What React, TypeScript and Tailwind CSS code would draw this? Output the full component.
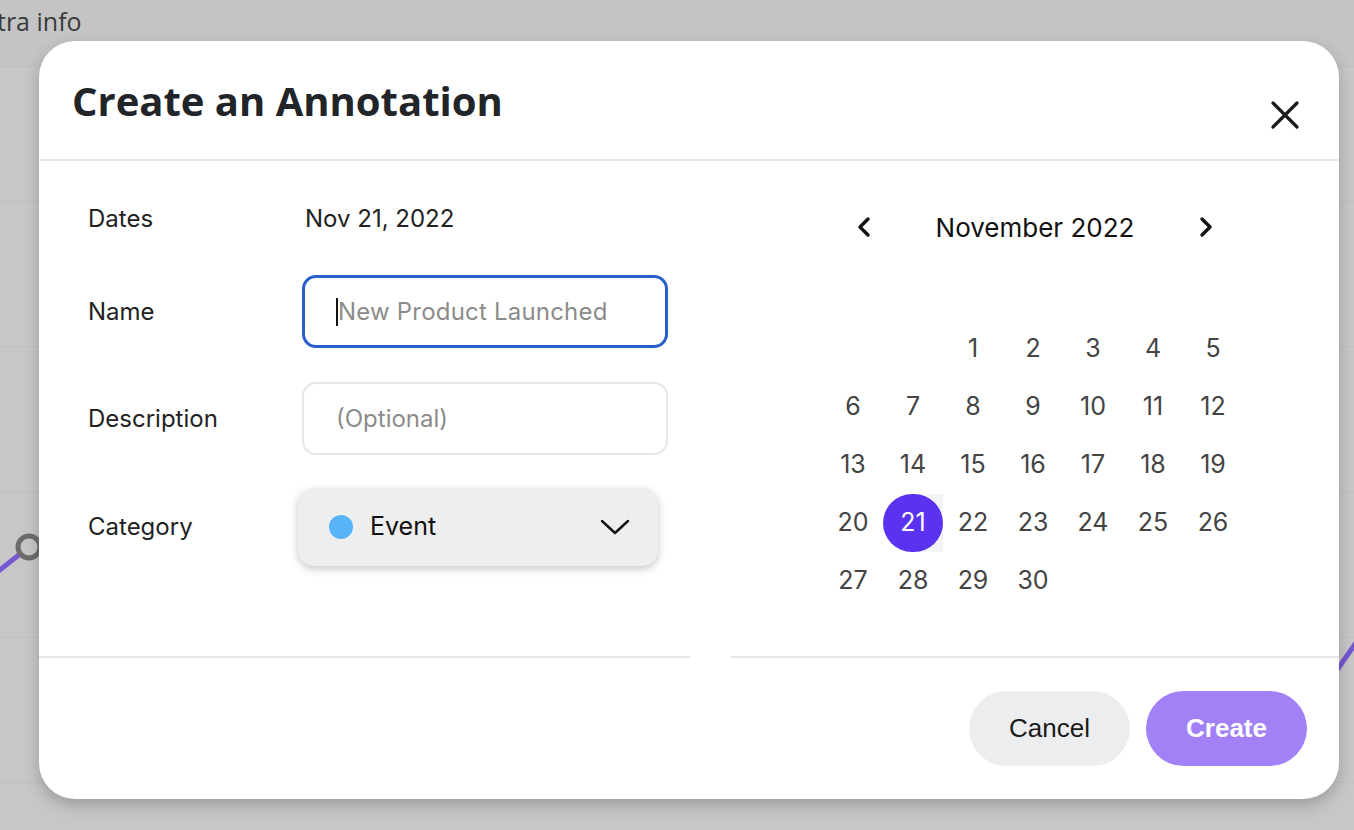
import React from "react";

const days: (number | null)[] = [
  null, null, 1, 2, 3, 4, 5,
  6, 7, 8, 9, 10, 11, 12,
  13, 14, 15, 16, 17, 18, 19,
  20, 21, 22, 23, 24, 25, 26,
  27, 28, 29, 30, null, null, null,
];

function Chevron({ dir }: { dir: "left" | "right" }) {
  return (
    <svg width="16" height="22" viewBox="0 0 16 22" fill="none">
      <polyline
        points={dir === "left" ? "12,3 4,11 12,19" : "4,3 12,11 4,19"}
        stroke="#111"
        strokeWidth="3.4"
        strokeLinecap="round"
        strokeLinejoin="round"
      />
    </svg>
  );
}

export default function App() {
  return (
    <div className="relative w-[1354px] h-[830px] overflow-hidden bg-[#c7c7c7] font-['Inter',sans-serif]">
      {/* page behind the overlay */}
      <div className="h-[67px] bg-[#c4c4c4] border-b border-[#bfbfbf]">
        <div className="ml-[-30px] pt-[3px] font-['Open_Sans',sans-serif] text-[25px] text-[#3b3b3b]">
          Extra info
        </div>
      </div>
      <div className="flex flex-col">
        <div className="h-[135px] border-b border-[#bfbfbf]" />
        <div className="h-[145px] border-b border-[#bfbfbf]" />
        <div className="h-[146px] border-b border-[#bfbfbf]" />
        <div className="h-[145px] border-b border-[#bfbfbf]" />
        <div className="h-[145px] border-b border-[#bfbfbf]" />
      </div>
      <svg className="absolute inset-0" width="1354" height="830">
        <line x1="-4" y1="573" x2="20" y2="554" stroke="#7558d2" strokeWidth="5" />
        <circle cx="29" cy="547" r="11" fill="#c7c7c7" stroke="#6c6c6c" strokeWidth="5" />
        <line x1="1330" y1="680" x2="1358" y2="640" stroke="#7558d2" strokeWidth="5" />
      </svg>

      {/* modal */}
      <div className="absolute left-[39px] top-[41px] w-[1300px] h-[758px] bg-white rounded-[36px] shadow-[0_6px_16px_rgba(0,0,0,0.22)] flex flex-col">
        <div className="h-[120px] flex items-start justify-between pl-[33px] pr-[40px] border-b-2 border-[#e6e6e6]">
          <h1 className="mt-[36px] font-['Open_Sans',sans-serif] font-bold text-[40px] leading-[48px] text-[#212428]">
            Create an Annotation
          </h1>
          <button className="mt-[60px]">
            <svg width="28" height="28" viewBox="0 0 28 28" fill="none">
              <path d="M2 2 L26 26 M26 2 L2 26" stroke="#1a1a1a" strokeWidth="3.2" strokeLinecap="round" />
            </svg>
          </button>
        </div>

        <div className="flex gap-[41px]">
          {/* form */}
          <div className="w-[651px] h-[497px] border-b-2 border-[#e6e6e6] pl-[49px] pt-[40px] text-[24px] text-[#222]">
            <div className="flex items-center h-[36px]">
              <div className="w-[217px]">Dates</div>
              <div>Nov 21, 2022</div>
            </div>
            <div className="flex items-center mt-[38px]">
              <div className="w-[214px]">Name</div>
              <div className="w-[366px] h-[73px] rounded-[14px] border-[3px] border-[#2a5fc9] flex items-center pl-[31px]">
                <span className="w-[2px] h-[28px] bg-[#111]" />
                <span className="text-[#8b8b8b] tracking-[0.2px]">New Product Launched</span>
              </div>
            </div>
            <div className="flex items-center mt-[34px]">
              <div className="w-[214px]">Description</div>
              <div className="w-[366px] h-[73px] rounded-[14px] border-2 border-[#e6e6e6] flex items-center pl-[32px] text-[#8b8b8b]">
                (Optional)
              </div>
            </div>
            <div className="flex items-center mt-[33px]">
              <div className="w-[210px]">Category</div>
              <div className="w-[360px] h-[78px] rounded-[16px] bg-[#eeeeee] shadow-[0_3px_8px_rgba(0,0,0,0.22)] flex items-center pl-[31px] pr-[28px]">
                <span className="w-[24px] h-[24px] rounded-full bg-[#58b4f8]" />
                <span className="ml-[17px] text-[25px] text-[#111]">Event</span>
                <svg className="ml-auto" width="30" height="16" viewBox="0 0 30 16" fill="none">
                  <polyline points="2,2 15,14 28,2" stroke="#111" strokeWidth="2.4" strokeLinecap="round" strokeLinejoin="round" />
                </svg>
              </div>
            </div>
          </div>

          {/* calendar */}
          <div className="flex-1 h-[497px] border-b-2 border-[#e6e6e6] pt-[46px]">
            <div className="w-[384px] mx-auto h-[40px] flex items-center justify-between">
              <button className="w-[42px] flex justify-center"><Chevron dir="left" /></button>
              <span className="text-[26px] text-[#111]">November 2022</span>
              <button className="w-[42px] flex justify-center"><Chevron dir="right" /></button>
            </div>
            <div className="mt-[73px] pl-[92px] grid grid-cols-[repeat(7,60px)] auto-rows-[58px] text-[25px] text-[#444]">
              {days.map((d, i) =>
                d === 21 ? (
                  <div key={i} className="relative flex items-center justify-center">
                    <span className="absolute right-0 top-0 bottom-0 w-[30px] bg-[#f3f4f6]" />
                    <span className="relative w-[60px] h-[58px] rounded-full bg-[#5b32ef] text-white flex items-center justify-center">
                      21
                    </span>
                  </div>
                ) : (
                  <div key={i} className="flex items-center justify-center">
                    {d ?? ""}
                  </div>
                )
              )}
            </div>
          </div>
        </div>

        <div className="flex justify-end gap-[16px] pt-[33px] pr-[32px] font-['Liberation_Sans',sans-serif] text-[26px]">
          <button className="w-[161px] h-[75px] rounded-full bg-[#ecedef] text-[#1a1a1a]">Cancel</button>
          <button className="w-[161px] h-[75px] rounded-full bg-[#a281f6] text-white font-bold">Create</button>
        </div>
      </div>
    </div>
  );
}
